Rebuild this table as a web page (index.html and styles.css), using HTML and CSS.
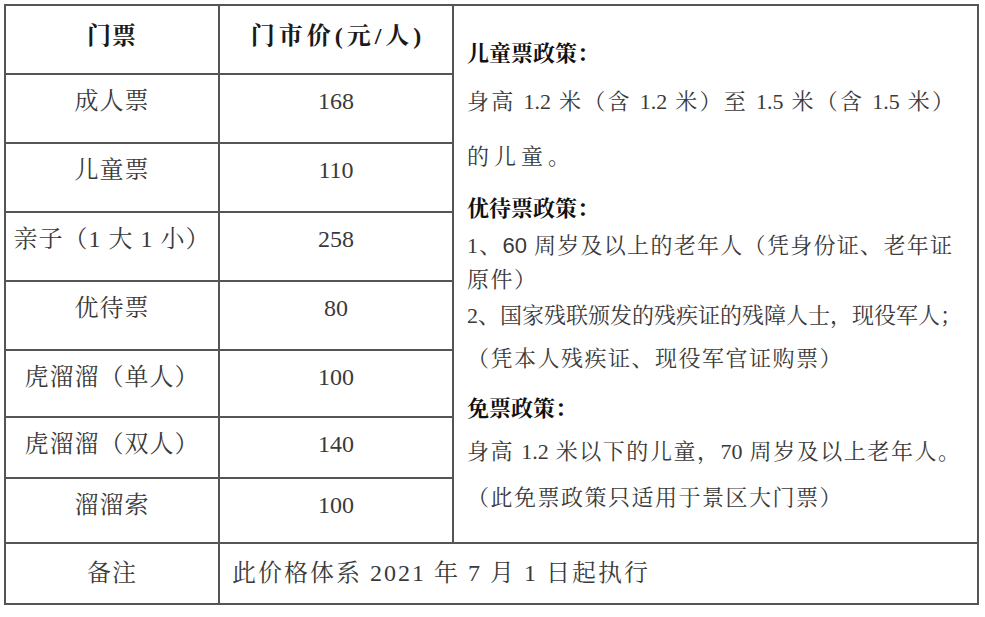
FILE: index.html
```html
<!DOCTYPE html>
<html lang="zh-CN">
<head>
<meta charset="utf-8">
<title>门票价格</title>
<link rel="stylesheet" href="styles.css">
</head>
<body>
<div class="page">
<table class="price">
  <colgroup><col class="c1"><col class="c2"><col class="c3"></colgroup>
  <tr class="r-head">
    <th>门票</th>
    <th class="head2">门市价(元/人)</th>
    <td rowspan="8" class="policy">
      <div class="ln bold m1">儿童票政策：</div>
      <div class="ln just m2">身高 1.2 米（含 1.2 米）至 1.5 米（含 1.5 米）</div>
      <div class="ln wide m3">的儿童。</div>
      <div class="ln bold m4">优待票政策：</div>
      <div class="ln just m5">1、<span class="sans">60</span> 周岁及以上的老年人（凭身份证、老年证</div>
      <div class="ln m6">原件）</div>
      <div class="ln just m7">2、国家残联颁发的残疾证的残障人士，现役军人；</div>
      <div class="ln m8">（凭本人残疾证、现役军官证购票）</div>
      <div class="ln bold m9">免票政策：</div>
      <div class="ln just m10">身高 1.2 米以下的儿童，70 周岁及以上老年人。</div>
      <div class="ln m11">（此免票政策只适用于景区大门票）</div>
    </td>
  </tr>
  <tr class="r69"><td class="name">成人票</td><td class="num">168</td></tr>
  <tr class="r69"><td class="name">儿童票</td><td class="num">110</td></tr>
  <tr class="r69"><td class="name">亲子（1 大 1 小）</td><td class="num">258</td></tr>
  <tr class="r69"><td class="name">优待票</td><td class="num">80</td></tr>
  <tr class="r67"><td class="name">虎溜溜（单人）</td><td class="num">100</td></tr>
  <tr class="r61"><td class="name">虎溜溜（双人）</td><td class="num">140</td></tr>
  <tr class="r65"><td class="name">溜溜索</td><td class="num">100</td></tr>
  <tr class="r-note"><td class="name note-name">备注</td><td colspan="2" class="note">此价格体系 2021 年 7 月 1 日起执行</td></tr>
</table>
</div>
</body>
</html>
```
FILE: styles.css
```css
html, body {
  margin: 0;
  padding: 0;
  background: #ffffff;
}
.page {
  padding: 4px 0 0 4px;
}
.price {
  border-collapse: collapse;
  table-layout: fixed;
  width: 973px;
  font-family: "Liberation Serif", "Noto Serif CJK SC", "Noto Sans CJK SC", serif;
  color: #3a3a3a;
}
.c1 { width: 214px; }
.c2 { width: 234px; }
.c3 { width: 525px; }
.price th, .price td {
  border: 2px solid #555555;
  padding: 0;
  vertical-align: top;
}
.price th {
  font-size: 24px;
  font-weight: bold;
  color: #1a1a1a;
  line-height: 30px;
  padding-top: 15px;
  text-align: center;
  letter-spacing: 1px;
}
.price th.head2 { letter-spacing: 4px; padding-left: 4px; }
.r-head { height: 69px; }
.r69 { height: 69px; }
.r67 { height: 67px; }
.r61 { height: 61px; }
.r65 { height: 65px; }
.r-note { height: 61px; }
.name {
  font-size: 24px;
  line-height: 30px;
  padding-top: 11px !important;
  text-align: center;
  letter-spacing: 1px;
}
.num {
  font-size: 24px;
  line-height: 30px;
  padding-top: 11px !important;
  text-align: center;
}
.note-name { padding-top: 14px !important; }
.note {
  font-size: 24px;
  line-height: 30px;
  padding: 14px 0 0 12px !important;
  text-align: left;
  letter-spacing: 2px;
}
.policy {
  padding: 31px 17px 0 13px !important;
  font-size: 22px;
}
.ln {
  line-height: 34px;
  white-space: nowrap;
  letter-spacing: 1.5px;
}
.just {
  text-align: justify;
  text-align-last: justify;
  letter-spacing: 0;
}
.wide { letter-spacing: 5px; }
.bold {
  font-weight: bold;
  color: #111111;
  letter-spacing: 0;
}
.sans { font-family: "Liberation Sans", sans-serif; }
.m1 { margin-top: 0; }
.m2 { margin-top: 14px; margin-right: 6px; }
.m3 { margin-top: 21px; }
.m4 { margin-top: 18px; }
.m5 { margin-top: 3px; margin-right: 8px; }
.m6 { margin-top: 0; }
.m7 { margin-top: 2px; }
.m8 { margin-top: 9px; }
.m9 { margin-top: 16px; }
.m10 { margin-top: 9px; }
.m11 { margin-top: 12px; }
```
